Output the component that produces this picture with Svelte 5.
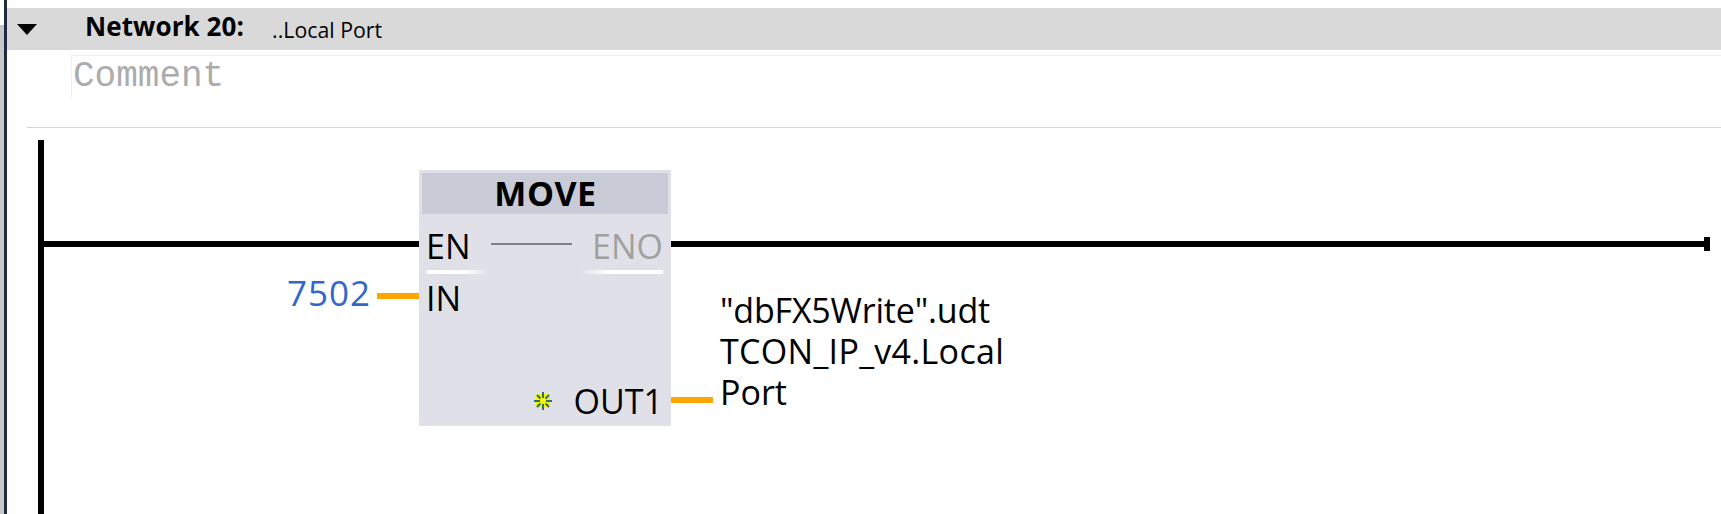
<script>
  const target = [
    { text: '"dbFX5Write".udt', cls: 'tight' },
    { text: 'TCON_IP_v4.Local', cls: 'loose' },
    { text: 'Port', cls: '' }
  ];
</script>

<div class="page">
  <div class="strip"></div>
  <main class="network">
    <header class="title-bar">
      <span class="caret"></span>
      <strong class="net-no">Network 20:</strong>
      <span class="net-title">..Local Port</span>
    </header>
    <div class="comment">Comment</div>
    <hr class="rule" />
    <section class="diagram">
      <div class="rail"></div>
      <div class="rung"></div>
      <div class="rung-end"></div>

      <div class="block">
        <div class="block-name">MOVE</div>
        <div class="en-row">
          <span class="en">EN</span>
          <span class="link"></span>
          <span class="eno">ENO</span>
          <i class="glow left"></i>
          <i class="glow right"></i>
        </div>
        <div class="pin-in">IN</div>
        <div class="out-row">
          <svg class="star" viewBox="0 0 18 18" width="18" height="18" aria-hidden="true">
            <rect x="2" y="2" width="14" height="14" rx="3" fill="#f4f400" />
            <g stroke="#2f6f78" stroke-width="2">
              <path d="M9 0v6M9 12v6M0 9h6M12 9h6M3 3l3.5 3.5M11.5 11.5L15 15M15 3l-3.5 3.5M6.5 11.5L3 15" />
            </g>
            <circle cx="9" cy="9" r="3" fill="#f4f400" />
          </svg>
          <span>OUT1</span>
        </div>
      </div>

      <span class="const">7502</span>
      <div class="wire wire-in"></div>
      <div class="wire wire-out"></div>
      <div class="operand">
        {#each target as line}<div class={line.cls}>{line.text}</div>{/each}
      </div>
    </section>
  </main>
</div>

<style>
  :global(body) { margin: 0; background: #fff; }
  .page {
    display: flex;
    width: 1721px;
    height: 514px;
    overflow: hidden;
    font-family: "Open Sans", "Noto Sans", sans-serif;
    color: #000;
  }
  .strip {
    flex: none;
    width: 7px;
    box-sizing: border-box;
    background: linear-gradient(#fff 0 25px, #c4c4c4 25px 27px, #c8c8c8 27px);
    border-right: 3px solid #1f2a44;
  }
  .network { flex: 1; min-width: 0; padding-top: 8px; display: flex; flex-direction: column; }
  .title-bar {
    height: 42px;
    flex: none;
    background: #d9d9d9;
    display: flex;
    align-items: center;
  }
  .caret {
    width: 0; height: 0;
    margin-left: 10px;
    border-left: 10px solid transparent;
    border-right: 10px solid transparent;
    border-top: 11px solid #000;
  }
  .net-no { margin-left: 48px; padding-bottom: 6px; font-size: 26px; font-weight: 700; letter-spacing: 0.1px; }
  .net-title { margin-left: 28px; font-size: 21.3px; }
  .comment {
    margin: 5px 0 0 64px;
    height: 43px;
    box-sizing: border-box;
    border-top: 1px solid #f0f0f0;
    border-left: 1px solid #f0f0f0;
    padding: 2px 0 0 1px;
    font: 36px/38px "Liberation Mono", monospace;
    letter-spacing: 0;
    color: #acacac;
    flex: none;
  }
  .rule {
    flex: none;
    margin: 29px 0 0 20px;
    height: 1px;
    border: 0;
    background: #d6d3e8;
  }
  .diagram { position: relative; flex: 1; }
  .rail { position: absolute; left: 31px; top: 12px; bottom: 0; width: 6px; background: #000; }
  .rung { position: absolute; left: 37px; right: 17px; top: 113px; height: 6px; background: #000; }
  .rung-end { position: absolute; right: 11px; top: 109px; width: 6px; height: 14px; background: #000; }

  .block {
    position: absolute;
    left: 412px;
    top: 42px;
    width: 252px;
    height: 256px;
    background: #e0e0e8;
    padding: 3px;
    box-sizing: border-box;
    font-size: 34px;
  }
  .block-name {
    height: 41px;
    background: #c9cbd7;
    text-align: center;
    font-weight: 700;
    line-height: 41px;
    letter-spacing: 0.5px;
    padding-left: 1px;
    box-sizing: border-box;
  }
  .en-row {
    position: relative;
    display: flex;
    align-items: center;
    height: 64px;
    padding: 0 5px 0 4px;
    line-height: 64px;
  }
  .eno { color: #a0a0a0; }
  .link { flex: 1; height: 2px; background: #808080; margin: 0 20px 4px; }
  .glow { position: absolute; bottom: 4px; height: 4px; }
  .glow.left { left: 5px; width: 63px; background: linear-gradient(90deg, #fff 60%, #e0e0e8); }
  .glow.right { right: 5px; width: 83px; background: linear-gradient(270deg, #fff 65%, #e0e0e8); }
  .pin-in { padding-left: 4px; line-height: 40px; }
  .out-row {
    position: absolute;
    right: 8px;
    bottom: 3px;
    display: flex;
    align-items: center;
    gap: 22px;
    line-height: 44px;
  }
  .const { position: absolute; left: 280px; top: 143px; font-size: 35px; line-height: 44px; letter-spacing: 1px; color: #3366cc; }
  .wire { position: absolute; height: 6px; background: #ffa500; }
  .wire-in { left: 370px; width: 42px; top: 165px; }
  .wire-out { left: 664px; width: 42px; top: 269px; }
  .operand { position: absolute; left: 713px; top: 162px; font-size: 34px; line-height: 41px; white-space: nowrap; }
  .tight { letter-spacing: -0.2px; }
  .loose { letter-spacing: 0.3px; }
</style>
